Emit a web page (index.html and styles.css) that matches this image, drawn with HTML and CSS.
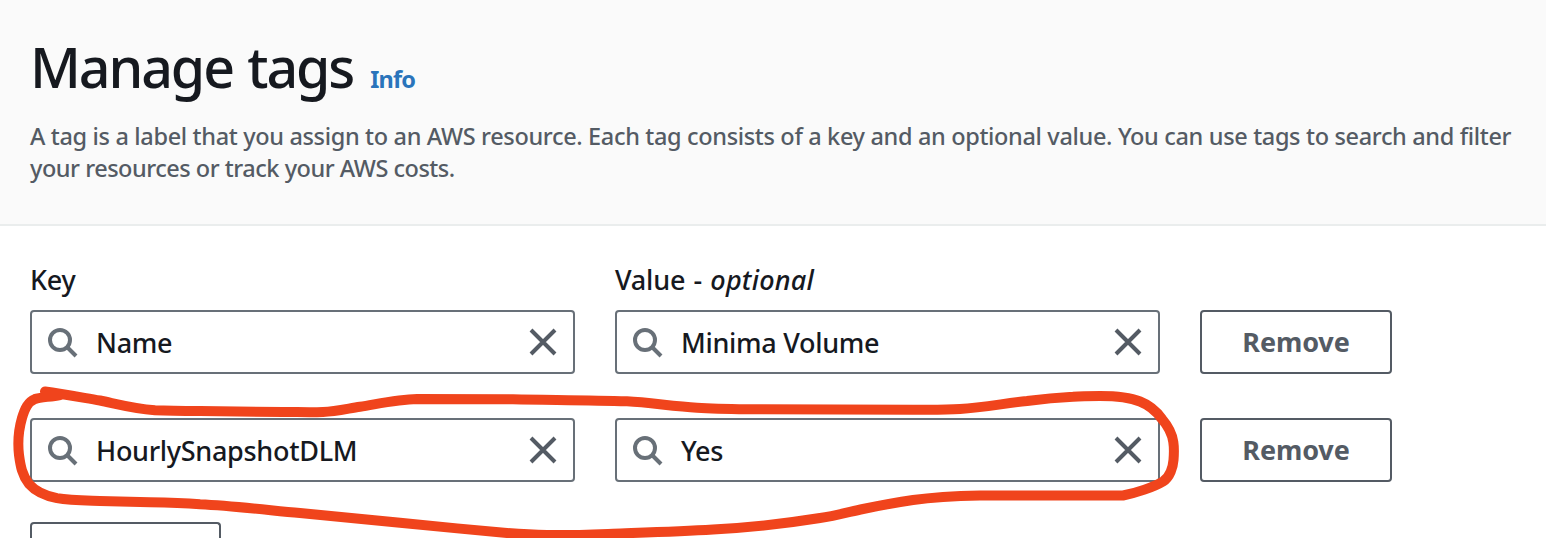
FILE: index.html
```html
<!DOCTYPE html>
<html lang="en">
<head>
<meta charset="utf-8">
<title>Manage tags</title>
<link rel="stylesheet" href="styles.css">
</head>
<body>
<svg class="defs" aria-hidden="true">
  <symbol id="search" viewBox="0 0 32 32"><circle cx="14" cy="14" r="10"/><path d="M21 21l9 9"/></symbol>
  <symbol id="close" viewBox="0 0 32 32"><path d="M4 4l24 24M28 4L4 28"/></symbol>
</svg>
<header class="header">
  <div class="heading"><h1 class="title">Manage tags</h1><a class="info">Info</a></div>
  <p class="description"><span class="line first">A tag is a label that you assign to an AWS resource. Each tag consists of a key and an optional value. You can use tags to search and filter</span> <span class="line">your resources or track your AWS costs.</span></p>
</header>
<main class="tags">
  <div class="row labels"><div class="label">Key</div><div class="label value-label">Value - <em>optional</em></div></div>
  <div class="row">
    <div class="field"><svg class="icon search"><use href="#search"/></svg><span class="text">Name</span><svg class="icon close"><use href="#close"/></svg></div>
    <div class="field"><svg class="icon search"><use href="#search"/></svg><span class="text">Minima Volume</span><svg class="icon close"><use href="#close"/></svg></div>
    <button class="button">Remove</button>
  </div>
  <div class="row">
    <div class="field"><svg class="icon search"><use href="#search"/></svg><span class="text">HourlySnapshotDLM</span><svg class="icon close"><use href="#close"/></svg></div>
    <div class="field"><svg class="icon search"><use href="#search"/></svg><span class="text">Yes</span><svg class="icon close"><use href="#close"/></svg></div>
    <button class="button">Remove</button>
  </div>
  <div class="add"></div>
</main>
<svg class="annotation" viewBox="0 0 1546 538"><path d="M45 391.5C63 394 82 397.500 100 400.500C117 404 133 408.500 155 410.300C170 411 182 411 200 411L283 412C297 412 310 412.500 323 412C336 411.500 348 408.500 360 406.700C380 403.500 398 399.500 417 399L513 399.200C550 400 590 400 627 401.300C650 402.500 674 406.500 697 407.700C714 408.800 730 409 747 409.200L913 409.700C930 409.700 945 410 960 409C983 407.500 1004 403.500 1027 401C1042 399 1057 397.500 1073 396.700C1082 396 1091 396 1100 396C1114 396 1129 397 1140 401.500C1149 405 1157 412 1162 419C1168 426 1172 433 1173.300 442C1174.200 448 1174 454 1173.500 460C1173 467 1170 477 1163 481.500C1154 487 1136 493 1123 495.500L980 495.500C957 496 935 497 913 500C896 502.500 880 505.500 863 509C849 512 835 516 820 518C786 523.500 750 527.500 713 529.500C680 531.500 646 532.500 613 533.700C592 534.500 569 535.500 547 535C533 534.800 520 534 507 533C473 530 433 526 400 522.700L300 513C267 510 234 506 200 504.300C184 503 167 502.500 150 502.300L100 501C84 500.500 70 500.500 57 498.200C46 496 36 492 29 484C22 475 20.500 466 19 455C17.500 442 18.500 430 22 418C25 408 28 402 35 399C40 397 51 397 60 395"/></svg>
</body>
</html>
```
FILE: styles.css
```css
* { box-sizing: border-box; }
body { margin: 0; height: 538px; overflow: hidden; background: #fff; color: #16191f; font-family: "Noto Sans", "Open Sans", sans-serif; position: relative; }
.defs { position: absolute; width: 0; height: 0; }
.header { height: 226px; padding: 29px 28px 0 30px; background: #fafafa; border-bottom: 2px solid #eaeded; }
.heading { display: flex; align-items: baseline; gap: 17px; height: 76px; }
.title { margin: 0; font-size: 55.5px; line-height: 76px; font-weight: 500; letter-spacing: -2.1px; word-spacing: 2px; }
.info { color: #2a74bb; font-size: 23.5px; font-weight: 700; letter-spacing: -.8px; }
.description { margin: 15px 0 0; color: #545b64; font-size: 23.5px; line-height: 32px; font-weight: 500; }
.line { display: block; white-space: nowrap; letter-spacing: -.48px; }
.first { letter-spacing: -.34px; }
.tags { height: 312px; padding: 34px 30px 0; display: flex; flex-direction: column; }
.row { display: grid; grid-template-columns: 545px 545px 192px; gap: 40px; height: 64px; margin-bottom: 44px; flex: none; }
.labels { height: 40px; margin-bottom: 10px; font-size: 27px; line-height: 40px; font-weight: 500; }
.label { white-space: nowrap; letter-spacing: -.2px; word-spacing: 1.5px; }
.label em { letter-spacing: .2px; }
.field { height: 64px; display: flex; align-items: center; padding: 0 14px; border: 2px solid #687078; border-radius: 4px; }
.icon { width: 32px; height: 32px; fill: none; flex: none; }
.search { stroke: #687078; stroke-width: 4; }
.close { stroke: #545b64; stroke-width: 4; }
.text { flex: 1; padding: 2px 0 0 18px; font-size: 27px; line-height: 36px; font-weight: 500; letter-spacing: -.3px; }
.button { height: 64px; padding: 0 0 2px; border: 2px solid #545b64; border-radius: 4px; background: #fff; color: #545b64; font: 700 27px "Noto Sans", sans-serif; letter-spacing: -.1px; }
.add { width: 191px; flex: 1; margin-top: -4px; border: 2px solid #545b64; border-bottom: 0; border-radius: 4px 4px 0 0; }
.annotation { position: absolute; left: 0; top: 0; width: 1546px; height: 538px; fill: none; stroke: #f0441c; stroke-width: 10; stroke-linecap: round; stroke-linejoin: round; }
```
